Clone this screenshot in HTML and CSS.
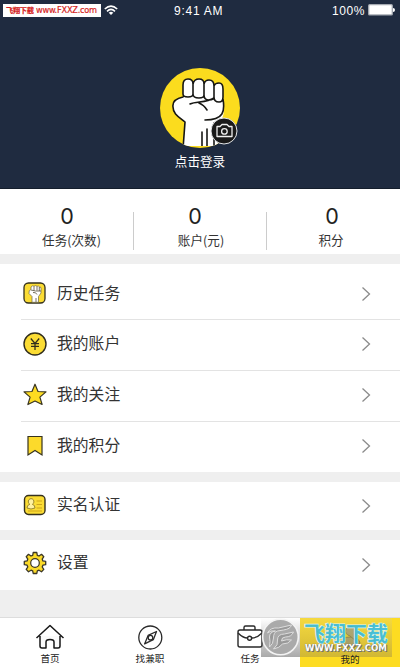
FILE: index.html
```
<!DOCTYPE html>
<html lang="zh-CN">
<head>
<meta charset="utf-8">
<title>我的</title>
<link rel="stylesheet" href="styles.css">
</head>
<body>
<svg width="0" height="0" class="defs">
  <defs>
    <symbol id="fist" viewBox="0 0 80 80">
      <path d="M25 83 27 56C21 51 15 48 15 41C14 34 20 32 25 31V19Q25 13 30 13Q35 13 35 18Q36 13 41 13Q46 13 46 18Q47 14 51 14Q56 14 56 20Q57 17 61 17Q65 17 65 23V40C67 47 65 53 60 59V83Z" fill="#fff"/>
      <path d="M25 83 27 56C21 51 15 48 15 41C14 34 20 32 25 31M25 28V19Q25 13 30 13Q35 13 35 18V28Q35 31 30 31Q25 31 25 28M35 18Q36 13 41 13Q46 13 46 18V29Q46 32 41 32Q35 32 35 28M46 18Q47 14 51 14Q56 14 56 20V31Q56 34 51 34Q46 34 46 29M56 20Q57 17 61 17Q65 17 65 23V31Q65 36 61 36Q56 36 56 31M65 33C67 45 66 54 47 54M32 38C38 35 48 37 56 32M41 37Q46 39 49 44M44 83V66M49 83V63M56 57V83" fill="none" stroke="#171714" stroke-width="1.6" stroke-linecap="round"/>
    </symbol>
    <symbol id="arrow" viewBox="0 0 10 16"><path d="m1.5 1.5 7 6.5-7 6.5" fill="none" stroke="#8b8b8b" stroke-width="1.3"/></symbol>
  </defs>
</svg>
<div class="app">
  <header class="hero">
    <div class="status">
      <span class="badge"><b>飞翔下载</b> www.FXXZ.com</span>
      <svg class="wifi" viewBox="0 0 14 11"><g fill="none" stroke="#fff" stroke-width="1.6"><path d="M.8 4Q7-1.7 13.2 4M3 6.3Q7 2.6 11 6.3"/></g><path d="M4.7 7.8Q7 5.9 9.3 7.8L7 10Z" fill="#fff"/></svg>
      <time>9:41 AM</time>
      <span class="power">100%</span>
      <svg class="battery" viewBox="0 0 27 12"><rect x=".7" y=".7" width="23.6" height="10.2" rx="1" fill="#fff" stroke="#a4a9b1" stroke-width="1.3"/><path d="M25 4q2 0 2 2t-2 2z" fill="#fff"/></svg>
    </div>
    <div class="avatar">
      <svg class="portrait" viewBox="0 0 80 80"><defs><clipPath id="round"><circle cx="40" cy="40" r="40"/></clipPath></defs><g clip-path="url(#round)"><rect width="80" height="80" fill="#fbdc1e"/><use href="#fist" x="-2" y="-2" width="80" height="80"/></g></svg>
      <svg class="camera" viewBox="0 0 28 28"><circle cx="14" cy="14" r="13" fill="#191919" stroke="#e4e6e8" stroke-width="1"/><g fill="none" stroke="#eee" stroke-width="1.3" stroke-linejoin="round"><path d="M7 9.5h3l2-2h5l2 2h3v10H7z"/><circle cx="14.4" cy="14.4" r="2.8"/></g></svg>
    </div>
    <div class="login">点击登录</div>
  </header>
  <section class="stats">
    <div class="stat tasks"><strong>0</strong><span>任务(次数)</span></div>
    <div class="stat money"><strong>0</strong><span>账户(元)</span></div>
    <div class="stat points"><strong>0</strong><span>积分</span></div>
  </section>
  <main>
    <section class="group">
      <div class="row first">
        <svg class="icon" viewBox="0 0 24 24"><rect x="1" y="2" width="21" height="20" rx="4.5" fill="#fbdc34" stroke="#33301e" stroke-width="1.3"/><path d="M9 21.3V15.5L6 12.5Q5.5 9 8 8.5V6Q9.5 4 11 5.3 12.5 4 14 5.3 15.5 4.5 16.5 6 18 5.5 18 7.5V12L15.500 15.500V21.300Z" fill="#fff" stroke="#6b6443" stroke-width=".7"/><path d="M11 5.500V9.500M14 5.500V9.500M16.300 6V10M8 9Q12 10.500 18 10M10 11.500Q13 11 14 13.500M13 21V17" fill="none" stroke="#554f3a" stroke-width=".8"/></svg>
        <span>历史任务</span><svg class="arrow"><use href="#arrow"/></svg>
      </div>
      <div class="row">
        <svg class="icon" viewBox="0 0 24 24"><circle cx="12" cy="12" r="11" fill="#fbdc34" stroke="#302d1d" stroke-width="1.4"/><path d="m7.8 6.5 4.2 5 4.2-5M12 11.5V18M8 11.7h8M8 14.4h8" fill="none" stroke="#302d1d" stroke-width="1.3"/></svg>
        <span>我的账户</span><svg class="arrow"><use href="#arrow"/></svg>
      </div>
      <div class="row">
        <svg class="icon" viewBox="0 0 24 24"><path d="m12 1.2 3 7.3 8 .4-6.1 5.2 2.2 7.4-7.1-3.5-7.1 3.5 2.2-7.4L1 8.9l8-.4z" fill="#fddc21" stroke="#393522" stroke-width="1.2" stroke-linejoin="round"/></svg>
        <span>我的关注</span><svg class="arrow"><use href="#arrow"/></svg>
      </div>
      <div class="row">
        <svg class="icon" viewBox="0 0 24 24"><path d="M5 2.5h14V21l-7-4.5L5 21z" fill="#fcda2b" stroke="#35321f" stroke-width="1.2"/></svg>
        <span>我的积分</span><svg class="arrow"><use href="#arrow"/></svg>
      </div>
    </section>
    <section class="group verify">
      <div class="row">
        <svg class="icon" viewBox="0 0 24 24"><rect x="1.5" y="2.5" width="20.5" height="19" rx="4" fill="#fbdc34" stroke="#35311f" stroke-width="1.4"/><path d="M4 15q0-3 2.8-3.7a2.8 3 0 1 1 2.6 0Q12 12 12 15q-4 2-8 0z" fill="#fff1a0" stroke="#81701d" stroke-width=".8"/><path d="M13.5 8H19M13.5 11.5H19M13.5 15H19M5 18h14" stroke="#d0a618"/></svg>
        <span>实名认证</span><svg class="arrow"><use href="#arrow"/></svg>
      </div>
    </section>
    <section class="group settings">
      <div class="row">
        <svg class="icon" viewBox="0 0 24 24"><path d="m9.7 4.3.5-2.8h3.6l.5 2.8 1.7.7 2.5-1.7 2.3 2.4-1.6 2.4.7 1.8 2.8.5v3.3l-2.8.5-.7 1.8 1.6 2.4-2.3 2.4L16 19.2l-1.7.7-.5 2.6h-3.6l-.5-2.6L8 19.2l-2.5 1.6-2.3-2.4L4.8 16l-.7-1.8-2.8-.5v-3.3l2.8-.5.7-1.8-1.6-2.4 2.3-2.4L8 5z" fill="#fbda29" stroke="#3b3727" stroke-width="1.3" stroke-linejoin="round"/><circle cx="12" cy="12" r="4.3" fill="#fff" stroke="#3b3727" stroke-width="1.2"/></svg>
        <span>设置</span><svg class="arrow"><use href="#arrow"/></svg>
      </div>
    </section>
  </main>
  <nav class="tabs">
    <div class="tab"><svg viewBox="0 0 30 26"><path d="M5 12v10q0 2 2 2h4v-6q0-2.5 4-2.5t4 2.5v6h4q2 0 2-2V12" fill="#fafafa"/><path d="M1.5 14 15 1.5 28.5 14M5 12v10q0 2 2 2h4v-6q0-2.5 4-2.5t4 2.5v6h4q2 0 2-2V12" fill="none" stroke="#171717" stroke-width="1.5" stroke-linejoin="round"/></svg><span>首页</span></div>
    <div class="tab"><svg viewBox="0 0 30 26"><g fill="none" stroke="#292929" stroke-width="1.3"><circle cx="15.3" cy="13.5" r="11.5"/><path d="m21.5 7.5-3.2 8.2-8.7 4.2 3.5-8.5z" stroke-linejoin="round"/><circle cx="15.5" cy="13.7" r="2.3"/></g></svg><span>找兼职</span></div>
    <div class="tab"><svg viewBox="0 0 30 26"><g fill="none" stroke="#292929" stroke-width="1.4"><rect x="3" y="6" width="24" height="17" rx="2"/><path d="M9 6V3.5Q9 2 10.5 2h8Q20 2 20 3.5V6M3 9q5 5 9.5 5M17 14q5 0 10-5"/><circle cx="14.6" cy="14.2" r="2"/></g></svg><span>任务</span></div>
    <div class="tab active"><svg viewBox="0 0 30 26"><g fill="#8d8f85" stroke="#55564c"><path d="M6 19q0-6 9-6t10 6q-2 4-9.5 4T6 19z"/><path d="M20 5q-5-5-9 0-2 5 4 7l6 5"/></g></svg><span>我的</span></div>
    <div class="watermark">
      <svg class="seal" viewBox="0 0 38 38"><circle cx="19" cy="19" r="17.8" fill="#aaa" stroke="#f3f3f3" stroke-width="1.6"/><g fill="#999" stroke="#ddd" stroke-width="1"><path d="M6 15Q9 9 17 10L30 7q-1 4-8 5l-6 1q-4 1-4 7 0 6-4 9 1-6 0-10 0-5 6-6-5-1-8 2z"/><path d="M12 31q5-4 4-9 0-6 7-6l9-2q-2 5-8 5-4 0-4 4 5-2 10-1-3 4-9 4-3 4-9 5z"/></g></svg>
      <div class="brand"><strong>飞翔下载</strong><span>WWW.FXXZ.COM</span></div>
    </div>
  </nav>
</div>
</body>
</html>
```
FILE: styles.css
```
* { box-sizing: border-box; }
body { margin: 0; font-family: "Noto Sans CJK SC", sans-serif; color: #333; }
.defs { position: absolute; }
.app { width: 400px; height: 667px; overflow: hidden; background: #efefef; display: flex; flex-direction: column; }
svg { display: block; flex: none; }

.hero { height: 189px; flex: none; background: #1f2b40; border-bottom: 1px solid #141e2c; display: flex; flex-direction: column; align-items: center; color: #fff; }
.status { width: 400px; height: 22px; padding: 0 5px 0 3px; display: grid; grid-template-columns: 98px 18px 166px 80px 30px; align-items: center; font: 12px/22px "Liberation Sans", sans-serif; }
.badge { height: 13px; margin-top: -1px; background: #fff; color: #d41e22; font: 8.2px/12px "DejaVu Sans", "Noto Sans CJK SC", sans-serif; white-space: nowrap; padding-left: 3px; letter-spacing: -.22px; -webkit-text-stroke: .2px #d41e22; }
.badge b { font: 700 7.2px/12px "Noto Sans CJK SC", sans-serif; letter-spacing: -.3px; }
.wifi { width: 14px; height: 11px; margin-left: 3px; margin-top: -2px; }
.status time { padding-left: 55px; white-space: nowrap; letter-spacing: .75px; }
.power { text-align: right; letter-spacing: .6px; }
.battery { width: 27px; height: 12px; margin-left: 3px; margin-top: -2px; }
.avatar { width: 80px; height: 80px; margin-top: 46px; position: relative; }
.portrait { width: 80px; height: 80px; }
.camera { position: absolute; width: 28px; height: 28px; left: 50px; top: 49px; }
.login { font-size: 12.6px; line-height: 18px; margin-top: 4px; }

.stats { height: 65px; flex: none; background: #fff; display: grid; grid-template-columns: 133px 133px 134px; }
.stat { display: flex; flex-direction: column; align-items: center; padding-top: 14px; position: relative; }
.stat strong { font: 400 21.5px/26px Inter, sans-serif; color: #222; }
.stat span { font-size: 12.6px; line-height: 18px; margin-top: 2px; }
.tasks { padding-left: 10px; }
.tasks strong { margin-right: 9px; }
.money { padding-left: 3px; }
.money strong { margin-right: 12px; }
.points { padding-right: 4px; }
.points strong { margin-left: 2px; }
.stat + .stat::before { content: ""; position: absolute; left: 0; top: 23px; height: 38px; width: 1px; background: #ccc; }

main { flex: 1; padding-top: 10px; }
.group { background: #fff; }
.row { height: 51px; padding: 0 29px 4px 23px; display: flex; align-items: center; font-size: 15.8px; position: relative; }
.row.first { height: 56px; padding-top: 3px; padding-bottom: 1px; }
.row:last-child { height: 50px; padding-bottom: 3px; }
.row + .row::before { content: ""; position: absolute; left: 21px; right: 0; top: -1px; height: 1px; background: #e3e3e3; }
.row span { flex: 1; margin-left: 10px; line-height: 24px; margin-top: -2px; }
.icon { width: 24px; height: 24px; }
.arrow { width: 10px; height: 16px; margin-top: 1px; }
.first span { margin-top: 0; }
.verify { margin-top: 10px; }
.verify .row:last-child { height: 48px; padding-bottom: 2px; }
.settings { margin-top: 10px; }
.settings .row:last-child { height: 50px; padding-bottom: 5px; }
.settings .arrow { margin-top: 4px; }

.tabs { height: 50px; flex: none; display: grid; grid-template-columns: repeat(4, 1fr); background: #fff; border-top: 1px solid #ddd; position: relative; }
.tab { display: flex; flex-direction: column; align-items: center; padding-top: 6px; }
.tab svg { width: 30px; height: 26px; }
.tab span { font-size: 9.6px; line-height: 12px; margin-top: 2px; color: #222; }
.active { background: #fddc22; }
.active span { line-height: 10px; margin-top: 4px; position: relative; z-index: 1; }
.watermark { position: absolute; left: 261px; top: 0; width: 131px; height: 39px; display: flex; background: linear-gradient(#fff0, #55555580) 0 0 / 39px 39px no-repeat, linear-gradient(#e9d56c66, #b49f3f99) 39px 0 / 92px 39px no-repeat; }
.seal { width: 39px; height: 38px; }
.brand { flex: 1; display: flex; flex-direction: column; align-items: center; padding-top: 2px; }
.brand strong { font-size: 21px; line-height: 24px; font-weight: 700; color: #2fb9dfdd; -webkit-text-stroke: 1.2px #e2f6ec; paint-order: stroke fill; white-space: nowrap; }
.brand span { font: 700 8.6px/8px "DejaVu Sans", sans-serif; color: #fff; text-shadow: 0 0 1px #555, 1px 1px 0 #777; white-space: nowrap; }
```
